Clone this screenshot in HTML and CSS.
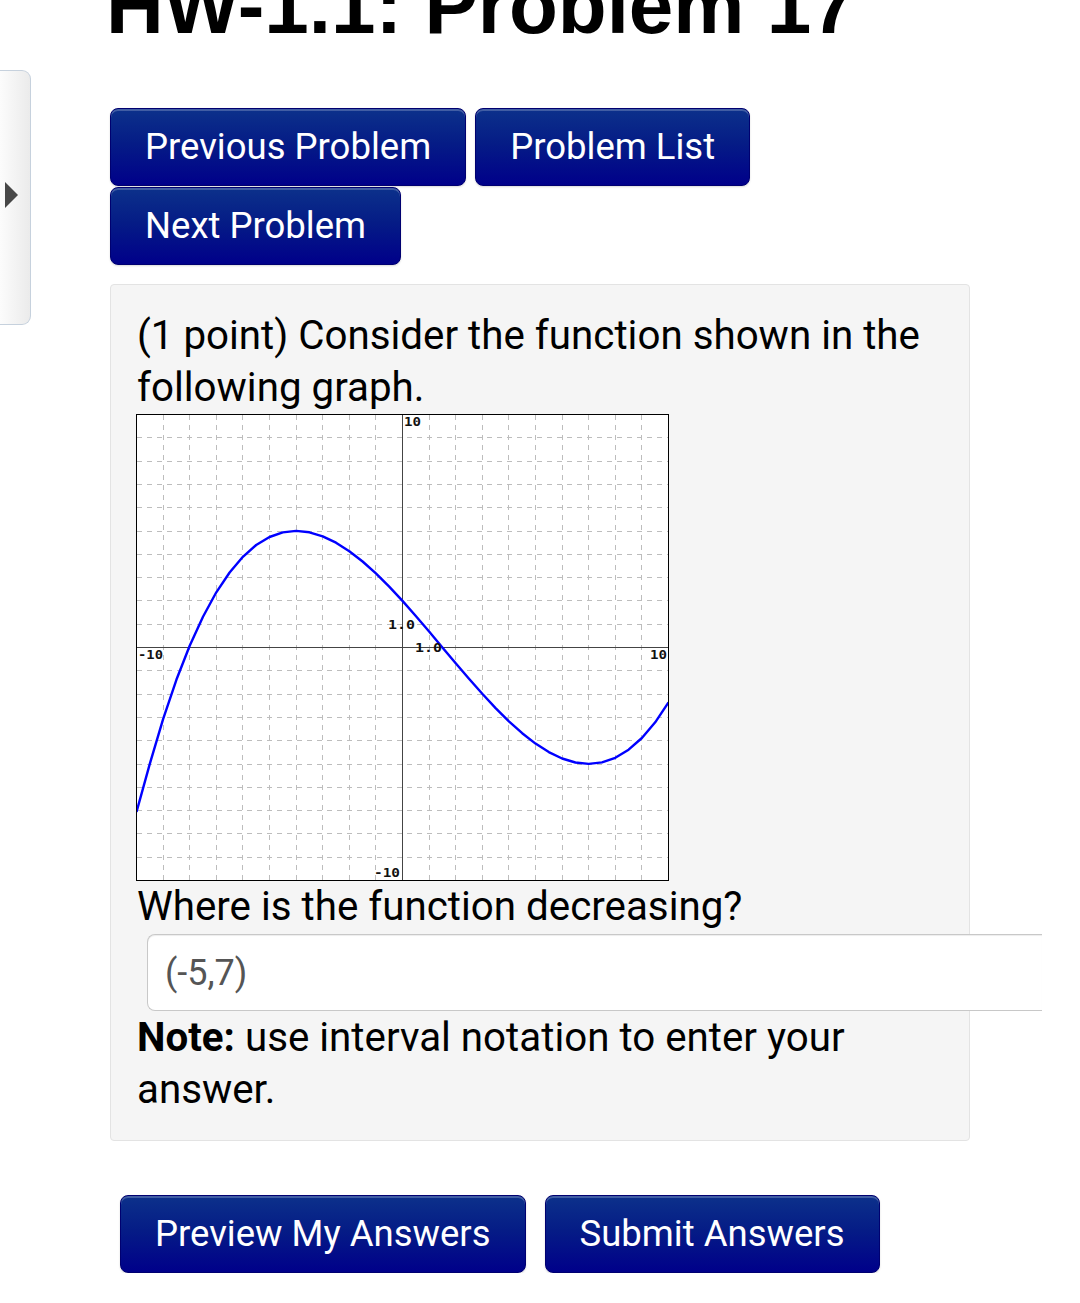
FILE: index.html
```html
<!DOCTYPE html>
<html lang="en">
<head>
<meta charset="utf-8">
<title>HW-1.1: Problem 17</title>
<link rel="stylesheet" href="styles.css">
</head>
<body>
<div class="side-tab"><span class="side-arrow"></span></div>
<main class="page">
  <h1 class="title">HW-1.1: Problem 17</h1>
  <nav class="nav-buttons">
    <a class="btn">Previous Problem</a>
    <a class="btn">Problem List</a>
    <a class="btn">Next Problem</a>
  </nav>
  <section class="problem">
    <p class="prob-text">(1 point) Consider the function shown in the following graph.</p>
    <svg class="graph" width="533" height="467" viewBox="0 0 533 467" xmlns="http://www.w3.org/2000/svg">
      <rect x="0" y="0" width="533" height="467" fill="#ffffff"/>
      <path fill="none" stroke="#bdbdbd" stroke-width="1" stroke-dasharray="5,5"
        d="M27.5 1V466 M53.5 1V466 M80.5 1V466 M106.5 1V466 M133.5 1V466 M160.5 1V466 M186.5 1V466 M213.5 1V466 M239.5 1V466 M293.5 1V466 M319.5 1V466 M346.5 1V466 M372.5 1V466 M399.5 1V466 M426.5 1V466 M452.5 1V466 M479.5 1V466 M505.5 1V466"/>
      <path fill="none" stroke="#bdbdbd" stroke-width="1" stroke-dasharray="5,5"
        d="M1 23.5H532 M1 47.5H532 M1 70.5H532 M1 93.5H532 M1 117.5H532 M1 140.5H532 M1 163.5H532 M1 186.5H532 M1 210.5H532 M1 256.5H532 M1 280.5H532 M1 303.5H532 M1 326.5H532 M1 350.5H532 M1 373.5H532 M1 396.5H532 M1 419.5H532 M1 443.5H532"/>
      <path fill="none" stroke="#444" stroke-width="1" d="M266.5 1V466 M1 233.5H532"/>
      <polyline fill="none" stroke="#0000ff" stroke-width="2.4" stroke-linejoin="round"
        points="0.5,398 13.8,349.9 27.1,305.1 40.4,265.8 53.7,231.7 67,202.7 80.3,178.3 93.6,158.5 106.9,142.8 120.2,131 133.5,123 146.8,118.4 160.1,116.9 173.4,118.3 186.7,122.3 200,128.7 213.3,137.2 226.6,147.5 239.9,159.4 253.2,172.6 266.5,186.9 279.8,201.95 293.1,217.5 306.4,233.4 319.7,249.2 333,264.8 346.3,279.8 359.6,294.1 372.9,307.3 386.2,319.2 399.5,329.6 412.8,338.1 426.1,344.5 439.4,348.5 452.7,349.9 466,348.4 479.3,343.8 492.6,335.7 505.9,324 519.2,308.3 532.5,288.4"/>
      <g class="glabels">
        <text x="268" y="12" textLength="17" lengthAdjust="spacingAndGlyphs">10</text>
        <text x="2" y="245" textLength="25" lengthAdjust="spacingAndGlyphs">-10</text>
        <text x="514" y="245" textLength="17" lengthAdjust="spacingAndGlyphs">10</text>
        <text x="238" y="463" textLength="26" lengthAdjust="spacingAndGlyphs">-10</text>
        <text x="252" y="215" textLength="27" lengthAdjust="spacingAndGlyphs">1.0</text>
        <text x="279" y="238" textLength="27" lengthAdjust="spacingAndGlyphs">1.0</text>
      </g>
      <rect x="0.5" y="0.5" width="532" height="466" fill="none" stroke="#000" stroke-width="1"/>
    </svg>
    <p class="prob-text">Where is the function decreasing?</p>
    <input class="answer" type="text" value="(-5,7)">
    <p class="prob-text"><b>Note:</b> use interval notation to enter your answer.</p>
  </section>
  <div class="submit-buttons">
    <a class="btn">Preview My Answers</a>
    <a class="btn">Submit Answers</a>
  </div>
</main>
</body>
</html>
```

FILE: styles.css
```css
html, body {
  margin: 0;
  padding: 0;
  background: #ffffff;
}
body {
  font-family: Roboto, "Liberation Sans", sans-serif;
  color: #000;
  overflow: hidden;
}
.side-tab {
  position: absolute;
  left: 0;
  top: 70px;
  width: 30px;
  height: 253px;
  border: 1px solid #c6d1dd;
  border-left: none;
  border-radius: 0 9px 9px 0;
  background: linear-gradient(to right, #fcfcfc, #ebebeb);
}
.side-arrow {
  position: absolute;
  left: 5px;
  top: 111px;
  width: 0;
  height: 0;
  border-top: 13px solid transparent;
  border-bottom: 13px solid transparent;
  border-left: 13px solid #474747;
}
.page {
  padding-left: 110px;
  width: 860px;
}
.title {
  font-family: "Liberation Sans", Arial, sans-serif;
  font-weight: bold;
  font-size: 80px;
  line-height: 80px;
  margin: -34px 0 0 -4px;
  white-space: nowrap;
}
.nav-buttons {
  display: flex;
  flex-wrap: wrap;
  column-gap: 9px;
  row-gap: 1px;
  margin-top: 62px;
}
.btn {
  display: inline-block;
  font-family: Roboto, sans-serif;
  font-size: 36.5px;
  line-height: 42px;
  color: #ffffff;
  padding: 17px 34px;
  border: 1px solid #000070;
  border-radius: 8px;
  background: linear-gradient(to bottom, #0c318b 0%, #051c86 45%, #00008a 100%);
  box-shadow: inset 0 2px 0 rgba(255, 255, 255, 0.22), 0 1px 2px rgba(0, 0, 0, 0.15);
  white-space: nowrap;
  cursor: pointer;
}
.problem {
  margin-top: 19px;
  background: #f5f5f5;
  border: 1px solid #e3e3e3;
  border-radius: 4px;
  padding: 25px 26px 24px 26px;
}
.prob-text {
  margin: 0;
  font-size: 40.3px;
  line-height: 52px;
}
.graph {
  display: block;
  margin-left: -1px;
}
.glabels text {
  font-family: "DejaVu Sans Mono", "Liberation Mono", monospace;
  font-weight: bold;
  font-size: 12px;
  fill: #111;
}
.answer {
  display: block;
  box-sizing: border-box;
  width: 895px;
  height: 77px;
  margin: 1px 0 1px 10px;
  padding: 0 17px;
  font-family: Roboto, sans-serif;
  font-size: 36px;
  color: #555;
  background: #fff;
  border: 1px solid #c8c8c8;
  border-right: none;
  border-radius: 8px 0 0 8px;
  box-shadow: inset 0 1px 1px rgba(0, 0, 0, 0.075);
  outline: none;
}
.submit-buttons {
  display: flex;
  column-gap: 19px;
  margin: 54px 0 0 10px;
}
```
